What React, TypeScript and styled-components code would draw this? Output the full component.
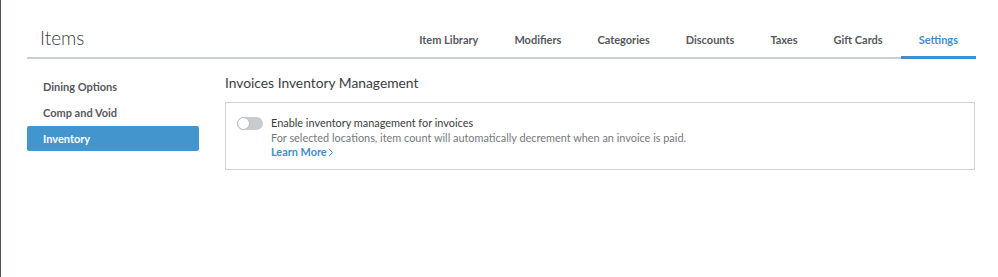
import React from 'react';
import styled, { createGlobalStyle } from 'styled-components';

const tabs = ['Item Library', 'Modifiers', 'Categories', 'Discounts', 'Taxes', 'Gift Cards', 'Settings'];
const sideItems = ['Dining Options', 'Comp and Void', 'Inventory'];

const GlobalStyle = createGlobalStyle`
    body {
        margin: 0;
        font-family: Lato, "Open Sans", sans-serif;
        background: #fff;
    }
`;

const App = () => {
    return (
        <Page>
            <GlobalStyle />
            <Container>
                <Header>
                    <Title>Items</Title>
                    <TabList>
                        {tabs.map((tab) => (
                            <Tab key={tab} active={tab === 'Settings'}>{tab}</Tab>
                        ))}
                    </TabList>
                </Header>
                <Body>
                    <Sidebar>
                        {sideItems.map((item) => (
                            <SideItem key={item} active={item === 'Inventory'}>{item}</SideItem>
                        ))}
                    </Sidebar>
                    <Content>
                        <SectionTitle>Invoices Inventory Management</SectionTitle>
                        <Card>
                            <Toggle>
                                <Knob />
                            </Toggle>
                            <Texts>
                                <Label>Enable inventory management for invoices</Label>
                                <Help>For selected locations, item count will automatically decrement when an invoice is paid.</Help>
                                <LearnMore>
                                    Learn More
                                    <svg width="6" height="9" viewBox="0 0 6 9">
                                        <path d="M1 1l3.5 3.5L1 8" fill="none" stroke="currentColor" strokeWidth="1" />
                                    </svg>
                                </LearnMore>
                            </Texts>
                        </Card>
                    </Content>
                </Body>
            </Container>
        </Page>
    );
}

export default App;


const Page = styled.div`
    height: 277px;
    border-left: 1px solid #4b5159;
    box-sizing: border-box;
`;

const Container = styled.div`
    width: 948px;
    margin-left: 26px;
`;

const Header = styled.div`
    display: flex;
    align-items: flex-end;
    justify-content: space-between;
    height: 59px;
    border-bottom: 2px solid #c9ced3;
    box-sizing: border-box;
`;

const Title = styled.div`
    font-size: 19px;
    font-weight: 300;
    color: #3a3d40;
    padding: 0 0 8px 13px;
    line-height: 22px;
`;

const TabList = styled.div`
    display: flex;
    margin-right: -1px;
`;

const Tab = styled.div`
    padding: 0 18px 8px;
    font-size: 11px;
    font-weight: 700;
    line-height: 16px;
    color: ${({ active }) => (active ? '#3d8fcd' : '#56595c')};
    border-bottom: 3px solid ${({ active }) => (active ? '#3d8fcd' : 'transparent')};
    margin-bottom: -2px;
`;

const Body = styled.div`
    display: flex;
    gap: 26px;
    padding-top: 13px;
`;

const Sidebar = styled.div`
    width: 172px;
    display: flex;
    flex-direction: column;
    gap: 1px;
    padding-top: 2px;
`;

const SideItem = styled.div`
    height: 25px;
    line-height: 25px;
    padding-left: 16px;
    font-size: 11px;
    font-weight: 700;
    border-radius: 2px;
    color: ${({ active }) => (active ? '#fff' : '#56595c')};
    background: ${({ active }) => (active ? '#4396cd' : 'transparent')};
`;

const Content = styled.div`
    flex: 1;
`;

const SectionTitle = styled.div`
    font-size: 13.8px;
    color: #3a3d40;
    line-height: 20px;
    margin-top: 1px;
    margin-bottom: 9px;
`;

const Card = styled.div`
    display: flex;
    gap: 8px;
    border: 1px solid #d0d4d8;
    padding: 12px 11px 10px;
    height: 68px;
    box-sizing: border-box;
`;

const Toggle = styled.div`
    width: 26px;
    height: 13px;
    border-radius: 7px;
    background: #c8ccd0;
    position: relative;
    flex-shrink: 0;
    margin-top: 2px;
`;

const Knob = styled.div`
    position: absolute;
    left: 0;
    top: 0;
    width: 13px;
    height: 13px;
    border-radius: 50%;
    background: #fff;
    border: 1px solid #b8bcc0;
    box-sizing: border-box;
`;

const Texts = styled.div`
    display: flex;
    flex-direction: column;
    font-size: 10.9px;
    line-height: 14.5px;
    padding-top: 1px;
`;

const Label = styled.div`
    color: #3a3d40;
`;

const Help = styled.div`
    color: #75797d;
`;

const LearnMore = styled.div`
    color: #3d8fcd;
    font-weight: 700;
    display: flex;
    align-items: center;
    gap: 1px;
`;
